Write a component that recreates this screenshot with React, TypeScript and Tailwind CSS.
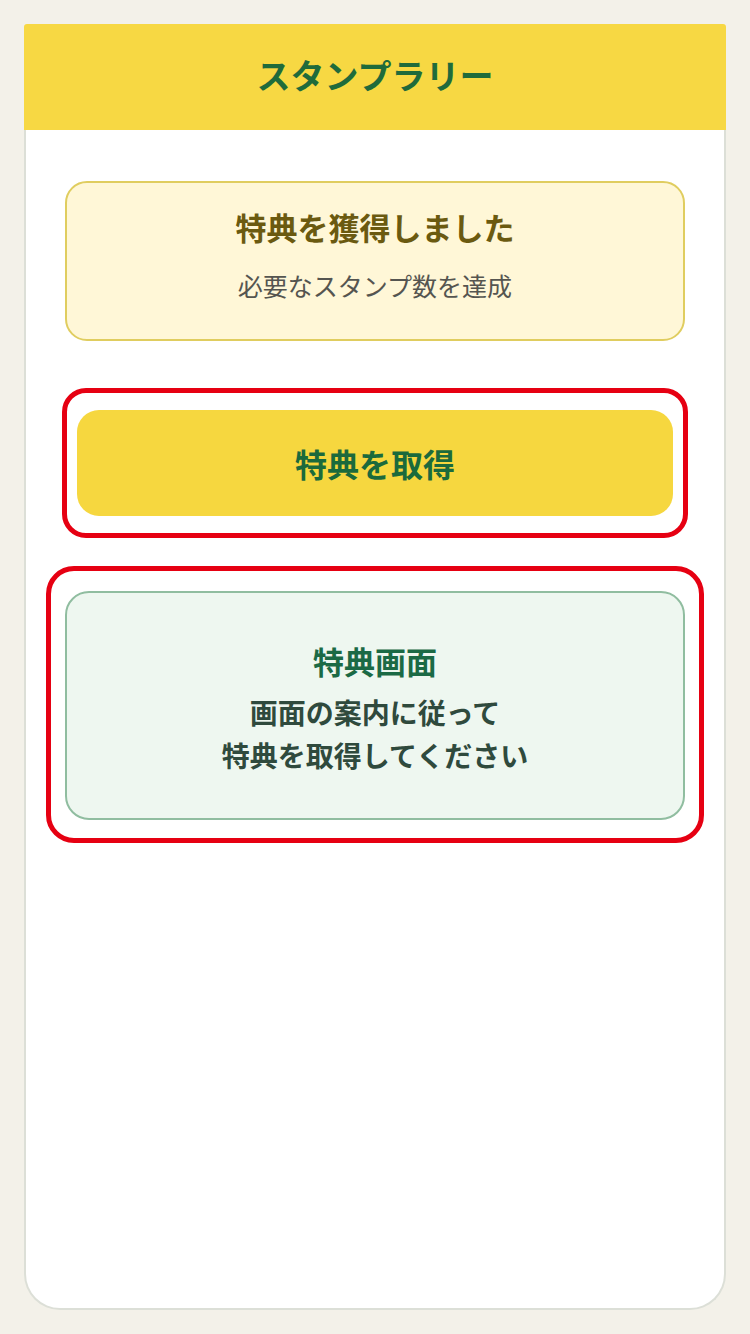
const JP = "font-['Noto_Sans_CJK_JP','Noto_Sans',sans-serif]";

function RewardNotice() {
  return (
    <div className="w-[620px] h-[160px] rounded-[22px] border-2 border-[#e0cd5f] bg-[#fff7d7] flex flex-col items-center justify-center gap-[25px] pb-[13px]">
      <h2 className="text-[31px] leading-[36px] font-bold text-[#6b5a10]">特典を獲得しました</h2>
      <p className="text-[25px] leading-[30px] text-[#555550]">必要なスタンプ数を達成</p>
    </div>
  );
}

function ClaimButton() {
  return (
    <div className="w-[626px] rounded-[24px] border-[5px] border-[#e60012] px-[10px] py-[17px]">
      <button className="w-full h-[106px] rounded-[22px] bg-[#f6d73f] text-[32px] font-bold text-[#1b6a3c]">
        特典を取得
      </button>
    </div>
  );
}

function RewardScreen() {
  return (
    <div className="w-[658px] rounded-[28px] border-[5px] border-[#e60012] px-[14px] pt-[20px] pb-[18px]">
      <div className="h-[229px] rounded-[24px] border-2 border-[#90bda0] bg-[#eef7f0] flex flex-col items-center justify-center pt-[4px]">
        <h3 className="text-[31px] leading-[44px] font-bold text-[#1b6a45]">特典画面</h3>
        <p className="mt-[8px] text-[28px] leading-[43px] font-bold text-[#2f4a3d] text-center">
          画面の案内に従って
          <br />
          特典を取得してください
        </p>
      </div>
    </div>
  );
}

export default function App() {
  return (
    <div className={`${JP} min-h-screen bg-[#f3f1e9] p-[24px]`}>
      <div className="w-[702px] h-[1286px] flex flex-col">
        <header className="h-[106px] shrink-0 rounded-t-[3px] bg-[#f7d843] flex items-center justify-center pb-[6px]">
          <h1 className="text-[34px] font-bold text-[#1f6b3b]">スタンプラリー</h1>
        </header>
        <main className="flex-1 bg-white border-x-2 border-b-2 border-[#dcdfd7] rounded-b-[36px] flex flex-col items-center pt-[51px]">
          <RewardNotice />
          <div className="mt-[47px]">
            <ClaimButton />
          </div>
          <div className="mt-[28px]">
            <RewardScreen />
          </div>
        </main>
      </div>
    </div>
  );
}
